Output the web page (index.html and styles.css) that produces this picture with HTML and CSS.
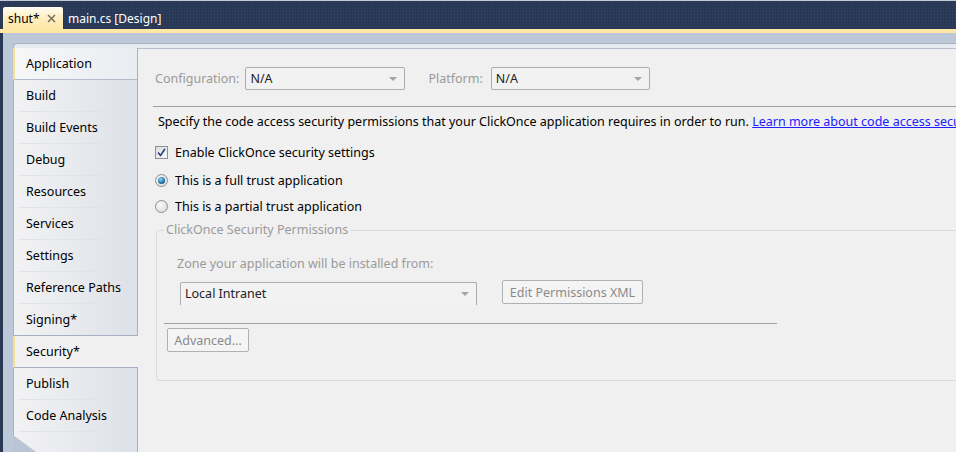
FILE: index.html
```html
<!DOCTYPE html>
<html lang="en">
<head>
    <meta charset="UTF-8">
    <title>shut* - Security</title>
    <link rel="stylesheet" href="styles.css">
</head>
<body>
    <!-- document tabs -->
    <div class="doc-tabs">
        <div class="doc-tab active">
            <span>shut*</span>
            <svg class="close" width="9" height="9" viewBox="0 0 9 9"><path d="M1 1L8 8M8 1L1 8" stroke="#6d6a5c" stroke-width="1.4"/></svg>
        </div>
        <div class="doc-tab">main.cs [Design]</div>
    </div>
    <div class="doc-strip"></div>

    <div class="workspace">
        <div class="page">
            <!-- project designer tabs -->
            <div class="nav">
                <div class="nav-item hover">Application</div>
                <div class="nav-item">Build</div>
                <div class="nav-item">Build Events</div>
                <div class="nav-item">Debug</div>
                <div class="nav-item">Resources</div>
                <div class="nav-item">Services</div>
                <div class="nav-item">Settings</div>
                <div class="nav-item">Reference Paths</div>
                <div class="nav-item before-selected">Signing*</div>
                <div class="nav-item selected">Security*</div>
                <div class="nav-item">Publish</div>
                <div class="nav-item">Code Analysis</div>
                <div class="nav-tail"></div>
            </div>

            <div class="content">
                <div class="config-row">
                    <span class="label-disabled">Configuration:</span>
                    <div class="combo combo-config">N/A<span class="arrow"></span></div>
                    <span class="label-disabled platform-label">Platform:</span>
                    <div class="combo combo-platform">N/A<span class="arrow"></span></div>
                </div>
                <div class="rule"></div>

                <p class="desc">Specify the code access security permissions that your ClickOnce application requires in order to run. <a href="#">Learn more about code access security...</a></p>

                <label class="option option-check">
                    <span class="checkbox">
                        <svg width="9" height="9" viewBox="0 0 9 9"><path d="M1 4.5L3.5 7.5L8 0.8" fill="none" stroke="#2a3e8c" stroke-width="1.6"/></svg>
                    </span>
                    Enable ClickOnce security settings
                </label>
                <label class="option option-full">
                    <span class="radio checked"></span>
                    This is a full trust application
                </label>
                <label class="option option-partial">
                    <span class="radio"></span>
                    This is a partial trust application
                </label>

                <fieldset class="perm-group">
                    <legend>ClickOnce Security Permissions</legend>
                    <div class="zone-label">Zone your application will be installed from:</div>
                    <div class="zone-row">
                        <div class="combo combo-zone">Local Intranet<span class="arrow"></span></div>
                        <button class="btn btn-xml" disabled>Edit Permissions XML</button>
                    </div>
                    <div class="group-rule"></div>
                    <button class="btn btn-advanced" disabled>Advanced...</button>
                </fieldset>
            </div>
        </div>
    </div>
</body>
</html>
```

FILE: styles.css
```css
body {
    margin: 0;
    font-family: "Noto Sans", "Segoe UI", Arial, sans-serif;
    font-size: 12.5px;
    color: #000;
    background-color: #293955;
    width: 956px;
    height: 452px;
    overflow: hidden;
}

/* document tabs */
.doc-tabs {
    height: 28px;
    border-top: 1px solid #c3cbd9;
    display: flex;
    align-items: flex-end;
    padding-left: 3px;
    background-color: #293955;
    background-image: radial-gradient(#32476a 0.6px, transparent 0.8px);
    background-size: 3px 3px;
}
.doc-tab {
    height: 22px;
    display: flex;
    align-items: center;
    padding: 0 5px;
    color: #fff;
    font-size: 12px;
}
.doc-tab.active {
    width: 50px;
    padding: 0 5px 0 5px;
    justify-content: space-between;
    color: #000;
    background: linear-gradient(#fffcf4, #ffefbf 50%, #ffe8a6);
    border-radius: 2px 2px 0 0;
}
.doc-tab.active .close {
    margin-right: 2px;
}
.doc-strip {
    height: 4px;
    background-color: #ffe8a6;
}

.workspace {
    margin-left: 3px;
    height: 409px;
    padding: 10px 0 0 10px;
    background-color: #bcc7d8;
}
.page {
    height: 418px;
    display: flex;
    border-top: 1px solid #a6b0c2;
    border-left: 1px solid #a6b0c2;
    border-top-left-radius: 4px;
    background-color: #e7eaf0;
    padding-top: 4px;
}

/* left nav */
.nav {
    width: 123px;
    display: flex;
    flex-direction: column;
    border-right: 1px solid #a6b0c2;
    background: linear-gradient(to right, #f2f2f3, #dde1e8);
}
.nav-item {
    height: 32px;
    line-height: 31px;
    padding-left: 12px;
    position: relative;
    box-sizing: border-box;
}
.nav-item::after {
    content: "";
    position: absolute;
    left: 4px;
    right: 16px;
    bottom: 0;
    border-bottom: 1px solid #dfe3ea;
}
.nav-item.hover {
    background: linear-gradient(to right, #f7f7f8, #e9ecf1);
    border-left: 2px solid #f7dd96;
    padding-left: 11px;
    margin-left: -1px;
    border-bottom: 1px solid #b4bccb;
}
.nav-item.hover::after,
.nav-item.before-selected::after,
.nav-item.selected::after {
    display: none;
}
.nav-item.before-selected {
    border-bottom: 1px solid #a6b0c2;
}
.nav-item.selected {
    background: #f1f1f1;
    border-left: 2px solid #f7dd96;
    padding-left: 11px;
    margin-left: -1px;
    margin-right: -1px;
    border-bottom: 1px solid #a6b0c2;
    z-index: 1;
}
.nav-tail {
    flex: 1;
    position: relative;
}
.nav-tail::before {
    content: "";
    position: absolute;
    left: -1px;
    right: 0;
    top: 3px;
    bottom: 0;
    background-color: #b9c4d6;
    clip-path: polygon(0 0, 0 100%, 100% 100%, 100% 100%, 34% 100%);
}

/* content */
.content {
    flex: 1;
    background-color: #f0f0f0;
    border-top: 1px solid #b6bfcd;
    overflow: hidden;
    white-space: nowrap;
}
.config-row {
    display: flex;
    align-items: center;
    height: 23px;
    margin: 18px 0 0 17px;
}
.label-disabled {
    color: #9a9a9a;
}
.combo {
    position: relative;
    height: 21px;
    line-height: 21px;
    padding-left: 4px;
    border: 1px solid #adadad;
    border-radius: 2px;
    background-color: #f2f2f2;
    color: #222;
    box-sizing: content-box;
}
.combo .arrow {
    position: absolute;
    right: 7px;
    top: 9px;
    border-left: 4px solid transparent;
    border-right: 4px solid transparent;
    border-top: 4px solid #a3a3a3;
}
.combo-config {
    width: 154px;
    margin-left: 6px;
}
.platform-label {
    margin-left: 23px;
}
.combo-platform {
    width: 153px;
    margin-left: 8px;
}
.rule {
    margin: 16px 0 0 15px;
    border-top: 1px solid #a0a0a0;
}
.desc {
    margin: 7px 0 0 20px;
    line-height: 16px;
}
.desc a {
    color: #2020ff;
}
.option {
    display: flex;
    align-items: center;
    height: 16px;
    margin-left: 17px;
}
.option-check { margin-top: 14px; }
.option-full { margin-top: 12px; }
.option-partial { margin-top: 10px; }
.checkbox {
    width: 11px;
    height: 11px;
    border: 1px solid #8e8f8f;
    background: linear-gradient(135deg, #dcdcdc, #fbfbfb);
    margin-right: 7px;
    display: flex;
    align-items: center;
    justify-content: center;
}
.radio {
    width: 11px;
    height: 11px;
    border: 1px solid #8e8f8f;
    border-radius: 50%;
    background: radial-gradient(circle at 40% 35%, #fafafa, #d6d6d6);
    margin-right: 7px;
    position: relative;
}
.radio.checked::after {
    content: "";
    position: absolute;
    left: 2px;
    top: 2px;
    width: 7px;
    height: 7px;
    border-radius: 50%;
    background: radial-gradient(circle at 40% 35%, #8fd6f5, #1a6fa6 60%, #0c3f68);
}

/* permissions group */
.perm-group {
    margin: 8px 0 0 18px;
    width: 900px;
    padding: 0 0 28px 0;
    border: 1px solid #d5dde4;
    border-radius: 3px;
}
.perm-group legend {
    margin-left: 7px;
    padding: 0 2px;
    line-height: 16px;
    color: #9a9a9a;
}
.zone-label {
    margin: 18px 0 0 20px;
    line-height: 16px;
    color: #9a9a9a;
}
.zone-row {
    display: flex;
    align-items: flex-start;
    margin: 8px 0 0 23px;
}
.combo-zone {
    width: 291px;
    height: 22px;
    margin-top: 2px;
    border-bottom: none;
    border-radius: 2px 2px 0 0;
}
.btn {
    height: 24px;
    padding: 0 6px;
    border: 1px solid #adb2b5;
    border-radius: 2px;
    background-color: #f4f4f4;
    color: #8a8a8a;
    font-family: inherit;
    font-size: 12.5px;
}
.btn-xml {
    width: 141px;
    margin-left: 25px;
}
.group-rule {
    width: 613px;
    margin: 18px 0 0 7px;
    border-top: 1px solid #a0a0a0;
}
.btn-advanced {
    width: 82px;
    margin: 4px 0 0 10px;
}
```
